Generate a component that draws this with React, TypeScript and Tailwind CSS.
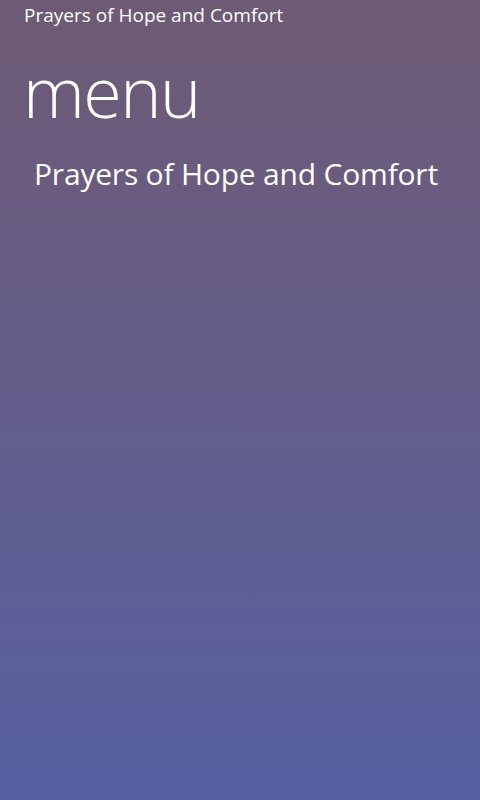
export default function App() {
  return (
    <div
      className="w-[480px] h-[800px] overflow-hidden text-white bg-gradient-to-b from-[#6e5a74] to-[#565fa1]"
      style={{ fontFamily: '"Open Sans", "Noto Sans", sans-serif' }}
    >
      <div className="pl-6 pt-[3px] text-[19px] leading-6">Prayers of Hope and Comfort</div>
      <div className="pl-[23px] mt-[24px] text-[70px] font-light leading-[80px] tracking-[-1.5px]">menu</div>
      <ul className="pl-[34px] mt-[25px]">
        <li className="text-[30px] leading-9 tracking-[-0.2px]">Prayers of Hope and Comfort</li>
      </ul>
    </div>
  );
}
